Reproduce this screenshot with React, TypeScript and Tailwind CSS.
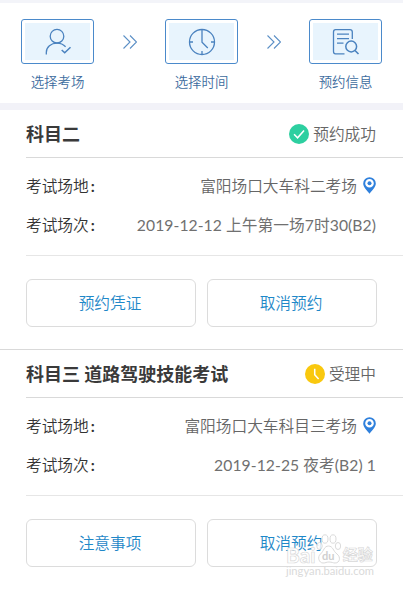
import type { ReactNode } from "react";

type Exam = {
  title: string;
  status: "success" | "pending";
  statusText: string;
  place: string;
  session: string;
  actions: string[];
};

const exams: Exam[] = [
  {
    title: "科目二",
    status: "success",
    statusText: "预约成功",
    place: "富阳场口大车科二考场",
    session: "2019-12-12 上午第一场7时30(B2)",
    actions: ["预约凭证", "取消预约"]
  },
  {
    title: "科目三 道路驾驶技能考试",
    status: "pending",
    statusText: "受理中",
    place: "富阳场口大车科目三考场",
    session: "2019-12-25 夜考(B2) 1",
    actions: ["注意事项", "取消预约"]
  }
];

function UserCheckIcon() {
  return (
    <svg width="28" height="28" viewBox="0 0 28 28" fill="none" stroke="#4a82bf" strokeWidth="1.3">
      <circle cx="13" cy="8.2" r="6.8" />
      <path d="M2.3 26.5V24.5C2.3 19 7 15.2 13 15.2C16.8 15.2 19.6 16.7 21.6 18.8" />
      <path d="M17.7 22L20.7 24.8L26.5 19.2" strokeWidth="1.5" />
    </svg>
  );
}

function ClockIcon() {
  return (
    <svg width="28" height="28" viewBox="0 0 28 28" fill="none" stroke="#4a82bf" strokeWidth="1.3">
      <circle cx="14" cy="14" r="12.5" />
      <path d="M14 1.5V14.3L19.8 20M1.5 14H5M23 14H26.5M14 23V26.5" />
    </svg>
  );
}

function DocSearchIcon() {
  return (
    <svg width="28" height="28" viewBox="0 0 28 28" fill="none" stroke="#4a82bf" strokeWidth="1.3">
      <path d="M20.3 11V4Q20.3 1.7 18 1.7H3.5Q1.5 1.7 1.5 4V23.5Q1.5 25.9 3.5 25.9H12.5" />
      <path d="M5 6.2H17M5 10.7H17M5 15.2H11.5" />
      <circle cx="19.2" cy="18.5" r="5.4" strokeWidth="1.5" />
      <path d="M23 22.5L26.5 26" strokeWidth="1.6" />
    </svg>
  );
}

function Step({ label, children }: { label: string; children: ReactNode }) {
  return (
    <div className="flex w-[73px] flex-col items-center">
      <div className="h-[45px] w-full rounded-[3px] border border-[#4b8acb] p-[3px]">
        <div className="flex h-full items-center justify-center bg-[#e8f4fd]">{children}</div>
      </div>
      <span className="mt-[8px] text-[13.4px] leading-[20px] font-[350] whitespace-nowrap text-[#3d6c9e]">{label}</span>
    </div>
  );
}

function Chevrons() {
  return (
    <svg className="mt-[16px]" width="14" height="14" viewBox="0 0 14 14" fill="none" stroke="#5b8fc6" strokeWidth="1.1">
      <path d="M.5 .5L7 7L.5 13.5M7 .5L13.5 7L7 13.5" />
    </svg>
  );
}

function StatusIcon({ status }: { status: Exam["status"] }) {
  if (status === "success") {
    return (
      <svg width="20" height="20" viewBox="0 0 21 21" fill="none">
        <circle cx="10.5" cy="10.5" r="10.5" fill="#2dcfa0" />
        <path d="M5.3 10.8L9 14.5L15.8 6.8" stroke="#fff" strokeWidth="1.6" />
      </svg>
    );
  }
  return (
    <svg width="20" height="20" viewBox="0 0 21 21" fill="none">
      <circle cx="10.5" cy="10.5" r="10.5" fill="#f9c80e" />
      <path d="M10.2 5V11.2L14.3 15.7" stroke="#fff" strokeWidth="1.6" />
    </svg>
  );
}

function PinIcon() {
  return (
    <svg className="mb-[2px]" width="13" height="17" viewBox="0 0 13 17">
      <path
        fillRule="evenodd"
        fill="#2f80dc"
        d="M6.5 .2A6.3 6.2 0 0 1 12.8 6.4C12.8 10 9.5 12.4 6.5 16.8C3.5 12.4 .2 10 .2 6.4A6.3 6.2 0 0 1 6.5 .2ZM6.5 2A4.3 4.3 0 1 0 6.5 10.6A4.3 4.3 0 1 0 6.5 2Z"
      />
      <circle cx="6.5" cy="6.3" r="2" fill="#2f80dc" />
    </svg>
  );
}

function ExamCard({ exam }: { exam: Exam }) {
  return (
    <section>
      <div className="ml-[26px] flex h-[48px] items-center justify-between border-b border-[#d9d9d9] pt-[1px] pr-[27px]">
        <h2 className="text-[18px] font-bold text-[#3a3a3a]">{exam.title}</h2>
        <div className="flex items-center gap-[4px] text-[15.7px] font-[350] text-[#666]">
          <StatusIcon status={exam.status} />
          <span className="pt-[1px]">{exam.statusText}</span>
        </div>
      </div>
      <div className="ml-[26px] h-[98px] border-b border-[#e6e6e6] pt-[9px] pr-[27px] text-[15.7px] font-[350] text-[#333]">
        <div className="flex h-[39px] items-center justify-between">
          <span>考试场地<span className="ml-[2px] font-bold">:</span></span>
          <span className="flex items-center gap-[6px] text-[#666]">
            {exam.place}
            <PinIcon />
          </span>
        </div>
        <div className="flex h-[39px] items-center justify-between">
          <span>考试场次<span className="ml-[2px] font-bold">:</span></span>
          <span className="font-normal tracking-[0.07px] text-[#707070]">{exam.session}</span>
        </div>
      </div>
      <div className="flex gap-[11px] pt-[23px] pr-[26px] pb-[22px] pl-[26px]">
        {exam.actions.map((action) => (
          <button key={action} className="h-[48px] flex-1 rounded-[6px] border border-[#dcdcdc] pt-[2px] pr-[2px] text-[15.7px] font-[350] text-[#1f88c8]">
            {action}
          </button>
        ))}
      </div>
    </section>
  );
}

function Watermark() {
  return (
    <div className="absolute top-[534px] left-[286px] w-[92px] text-[#dadada]">
      <div className="flex h-[31px] items-end font-bold">
        <span className="text-[21px] leading-[20px] text-white [-webkit-text-stroke:0.7px_#d8d8d8]">Bai</span>
        <span className="relative flex h-[31px] w-[25px] justify-center">
          <svg className="absolute inset-0" width="25" height="31" viewBox="0 0 25 31" fill="#fff" fillOpacity=".8" stroke="#d6d6d6" strokeWidth=".9">
            <ellipse cx="3.5" cy="12" rx="2.7" ry="3.5" />
            <ellipse cx="9" cy="5" rx="3" ry="4.2" />
            <ellipse cx="17" cy="5" rx="3" ry="4.2" />
            <ellipse cx="22" cy="12" rx="2.7" ry="3.5" />
            <path d="M12.5 12C8 12 8 17 4.5 20C1 23 3 29 7 29C10 29 10 28 13 28C16 28 17 29 19 29C24 29 25 23 21 20C17 17 17 12 12.5 12Z" />
          </svg>
          <span className="relative mt-[16px] text-[11px] leading-[12px] text-[#cfcfcf]">du</span>
        </span>
        <span className="ml-[2px] text-[15px] leading-[22px] text-white [-webkit-text-stroke:0.7px_#d8d8d8]">经验</span>
      </div>
      <div className="text-[11.2px] leading-[12px] whitespace-nowrap">jingyan.baidu.com</div>
    </div>
  );
}

export default function App() {
  return (
    <main className="relative h-[589px] w-[403px] overflow-hidden bg-white font-['Lato','Noto_Sans_CJK_SC',sans-serif]">
      <div className="h-[3px] bg-[#f3f4f9]" />
      <div className="flex h-[100px] justify-between pt-[16px] pr-[21px] pl-[21px]">
        <Step label="选择考场">
          <UserCheckIcon />
        </Step>
        <Chevrons />
        <Step label="选择时间">
          <ClockIcon />
        </Step>
        <Chevrons />
        <Step label="预约信息">
          <DocSearchIcon />
        </Step>
      </div>
      <div className="h-[7px] bg-[#f2f2f8]" />
      <ExamCard exam={exams[0]} />
      <div className="h-px bg-[#d9d9d9]" />
      <ExamCard exam={exams[1]} />
      <Watermark />
    </main>
  );
}
